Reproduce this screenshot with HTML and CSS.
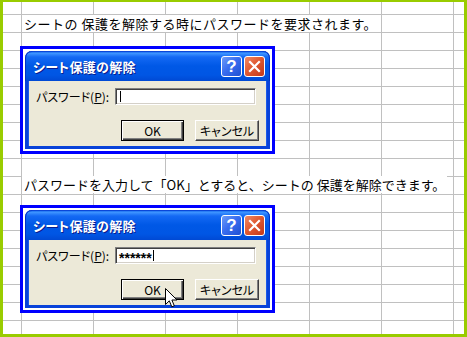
FILE: index.html
```html
<html>
  <head>
    <meta charset="UTF-8" />
    <link rel="stylesheet" href="styles.css">
  </head>
  <body>
    <div class="sheet">
      <div class="note">シートの 保護を解除する時にパスワードを要求されます。</div>

      <div class="frameBox first">
        <div class="dialog">
          <div class="titlebar">
            <span class="title">シート保護の解除</span>
            <span class="capBtn help">?</span>
            <span class="capBtn close">
              <svg width="13" height="13" viewBox="0 0 13 13"><path d="M2 2 L11 11 M11 2 L2 11" stroke="#fff" stroke-width="2.2" stroke-linecap="square"/></svg>
            </span>
          </div>
          <div class="body">
            <div class="field">
              <span class="label">パスワード(<u>P</u>):</span>
              <span class="input"><span class="caret"></span></span>
            </div>
            <div class="buttons">
              <span class="btn default">OK</span>
              <span class="btn">キャンセル</span>
            </div>
          </div>
        </div>
      </div>

      <div class="note second">パスワードを入力して「OK」とすると、シートの 保護を解除できます。</div>

      <div class="frameBox">
        <div class="dialog">
          <div class="titlebar">
            <span class="title">シート保護の解除</span>
            <span class="capBtn help">?</span>
            <span class="capBtn close">
              <svg width="13" height="13" viewBox="0 0 13 13"><path d="M2 2 L11 11 M11 2 L2 11" stroke="#fff" stroke-width="2.2" stroke-linecap="square"/></svg>
            </span>
          </div>
          <div class="body">
            <div class="field">
              <span class="label">パスワード(<u>P</u>):</span>
              <span class="input"><span class="stars">******</span><span class="caret"></span></span>
            </div>
            <div class="buttons">
              <span class="btn default">OK</span>
              <span class="btn">キャンセル</span>
            </div>
          </div>
          <svg class="pointer" width="13" height="20" viewBox="0 0 13 20">
            <path d="M0.5 0.5 L0.5 16.5 L4.3 12.8 L6.8 18.8 L9.3 17.8 L6.9 12 L12 12 Z" fill="#fff" stroke="#000" stroke-width="1" stroke-linejoin="miter"/>
          </svg>
        </div>
      </div>
    </div>
  </body>
</html>
```

FILE: styles.css
```css
body {
  margin: 0;
}
.sheet {
  width: 467px;
  height: 337px;
  box-sizing: border-box;
  border: 3px solid #99cc00;
  border-top-width: 2px;
  padding-left: 17px;
  overflow: hidden;
  background-color: #fff;
  background-image:
    linear-gradient(to right, #c0c0c0 1px, transparent 1px),
    linear-gradient(to bottom, #c0c0c0 1px, transparent 1px);
  background-size: 72px 100%, 100% 18px;
  background-position: 18px 0, 0 12px;
  font-family: "Noto Sans CJK JP", sans-serif;
}
.note {
  width: fit-content;
  margin: 13px 0 0 2px;
  padding: 0 2px;
  height: 17px;
  line-height: 17px;
  font-size: 13px;
  letter-spacing: 0.5px;
  background: #fff;
  color: #000;
  white-space: nowrap;
}
.note.second {
  margin-top: 22px;
  letter-spacing: 0;
}
.frameBox {
  width: fit-content;
  margin-top: 12px;
  border: 3px solid #0000ff;
  padding: 2px;
  background: #fff;
}
.frameBox.first {
  margin-top: 14px;
}
.dialog {
  position: relative;
  width: 245px;
}
.titlebar {
  height: 30px;
  box-sizing: border-box;
  display: flex;
  align-items: center;
  gap: 2px;
  padding: 0 5px 0 8px;
  border-radius: 7px 7px 0 0;
  background: linear-gradient(to bottom, #0a5ce8 0, #3d93ff 8%, #1469f4 20%, #0058e6 50%, #0056e4 80%, #0049d4 100%);
  box-shadow: inset 1px 0 #0031c6, inset -1px 0 #0031c6, inset 0 1px #0a46d8;
}
.title {
  flex: 1;
  color: #fff;
  font-size: 13px;
  font-weight: bold;
  font-feature-settings: "palt";
  letter-spacing: 0.3px;
  text-shadow: 1px 1px #0a1c8c;
  white-space: nowrap;
}
.capBtn {
  width: 21px;
  height: 21px;
  box-sizing: border-box;
  border: 1px solid #fff;
  border-radius: 3px;
  display: flex;
  align-items: center;
  justify-content: center;
}
.help {
  background: linear-gradient(135deg, #6e9cf8 0, #3a6ef0 45%, #1e4fd2 100%);
  color: #fff;
  font-family: "Liberation Sans", sans-serif;
  font-weight: bold;
  font-size: 17px;
  line-height: 1;
}
.close {
  background: linear-gradient(135deg, #f08a66 0, #e05a32 45%, #c2381a 100%);
}
.body {
  height: 68px;
  box-sizing: border-box;
  background: #ece9d8;
  border: 3px solid #0842d9;
  border-top: 0;
  box-shadow: inset 1px 0 #1a5ae8, inset -1px 0 #1a5ae8;
  padding: 7px 8px 0 8px;
  font-size: 12px;
}
.field {
  display: flex;
  align-items: center;
  height: 17px;
}
.label {
  width: 79px;
  font-feature-settings: "palt";
  color: #000;
  white-space: nowrap;
}
.input {
  width: 141px;
  height: 17px;
  box-sizing: border-box;
  display: flex;
  align-items: center;
  padding-left: 3px;
  background: #fff;
  border: 1px solid;
  border-color: #808080 #fff #fff #808080;
  box-shadow: inset 1px 1px #404040, inset -1px -1px #d4d0c8;
}
.stars {
  font-family: "Liberation Sans", sans-serif;
  font-weight: bold;
  font-size: 14px;
  letter-spacing: 0;
  line-height: 1;
  margin-top: 4px;
}
.caret {
  width: 1px;
  height: 11px;
  background: #000;
  margin-left: 1px;
}
.buttons {
  display: flex;
  justify-content: flex-end;
  gap: 11px;
  margin-top: 15px;
}
.btn {
  width: 64px;
  height: 21px;
  box-sizing: border-box;
  display: flex;
  align-items: center;
  justify-content: center;
  background: #ece9d8;
  border: 1px solid;
  border-color: #fff #404040 #404040 #fff;
  box-shadow: inset -1px -1px #808080;
  font-feature-settings: "palt";
  color: #000;
}
.btn.default {
  width: 63px;
  border: 1px solid #000;
  box-shadow: inset 1px 1px #fff, inset -1px -1px #404040, inset -2px -2px #808080;
}
.pointer {
  position: absolute;
  left: 140px;
  top: 78px;
}
```
